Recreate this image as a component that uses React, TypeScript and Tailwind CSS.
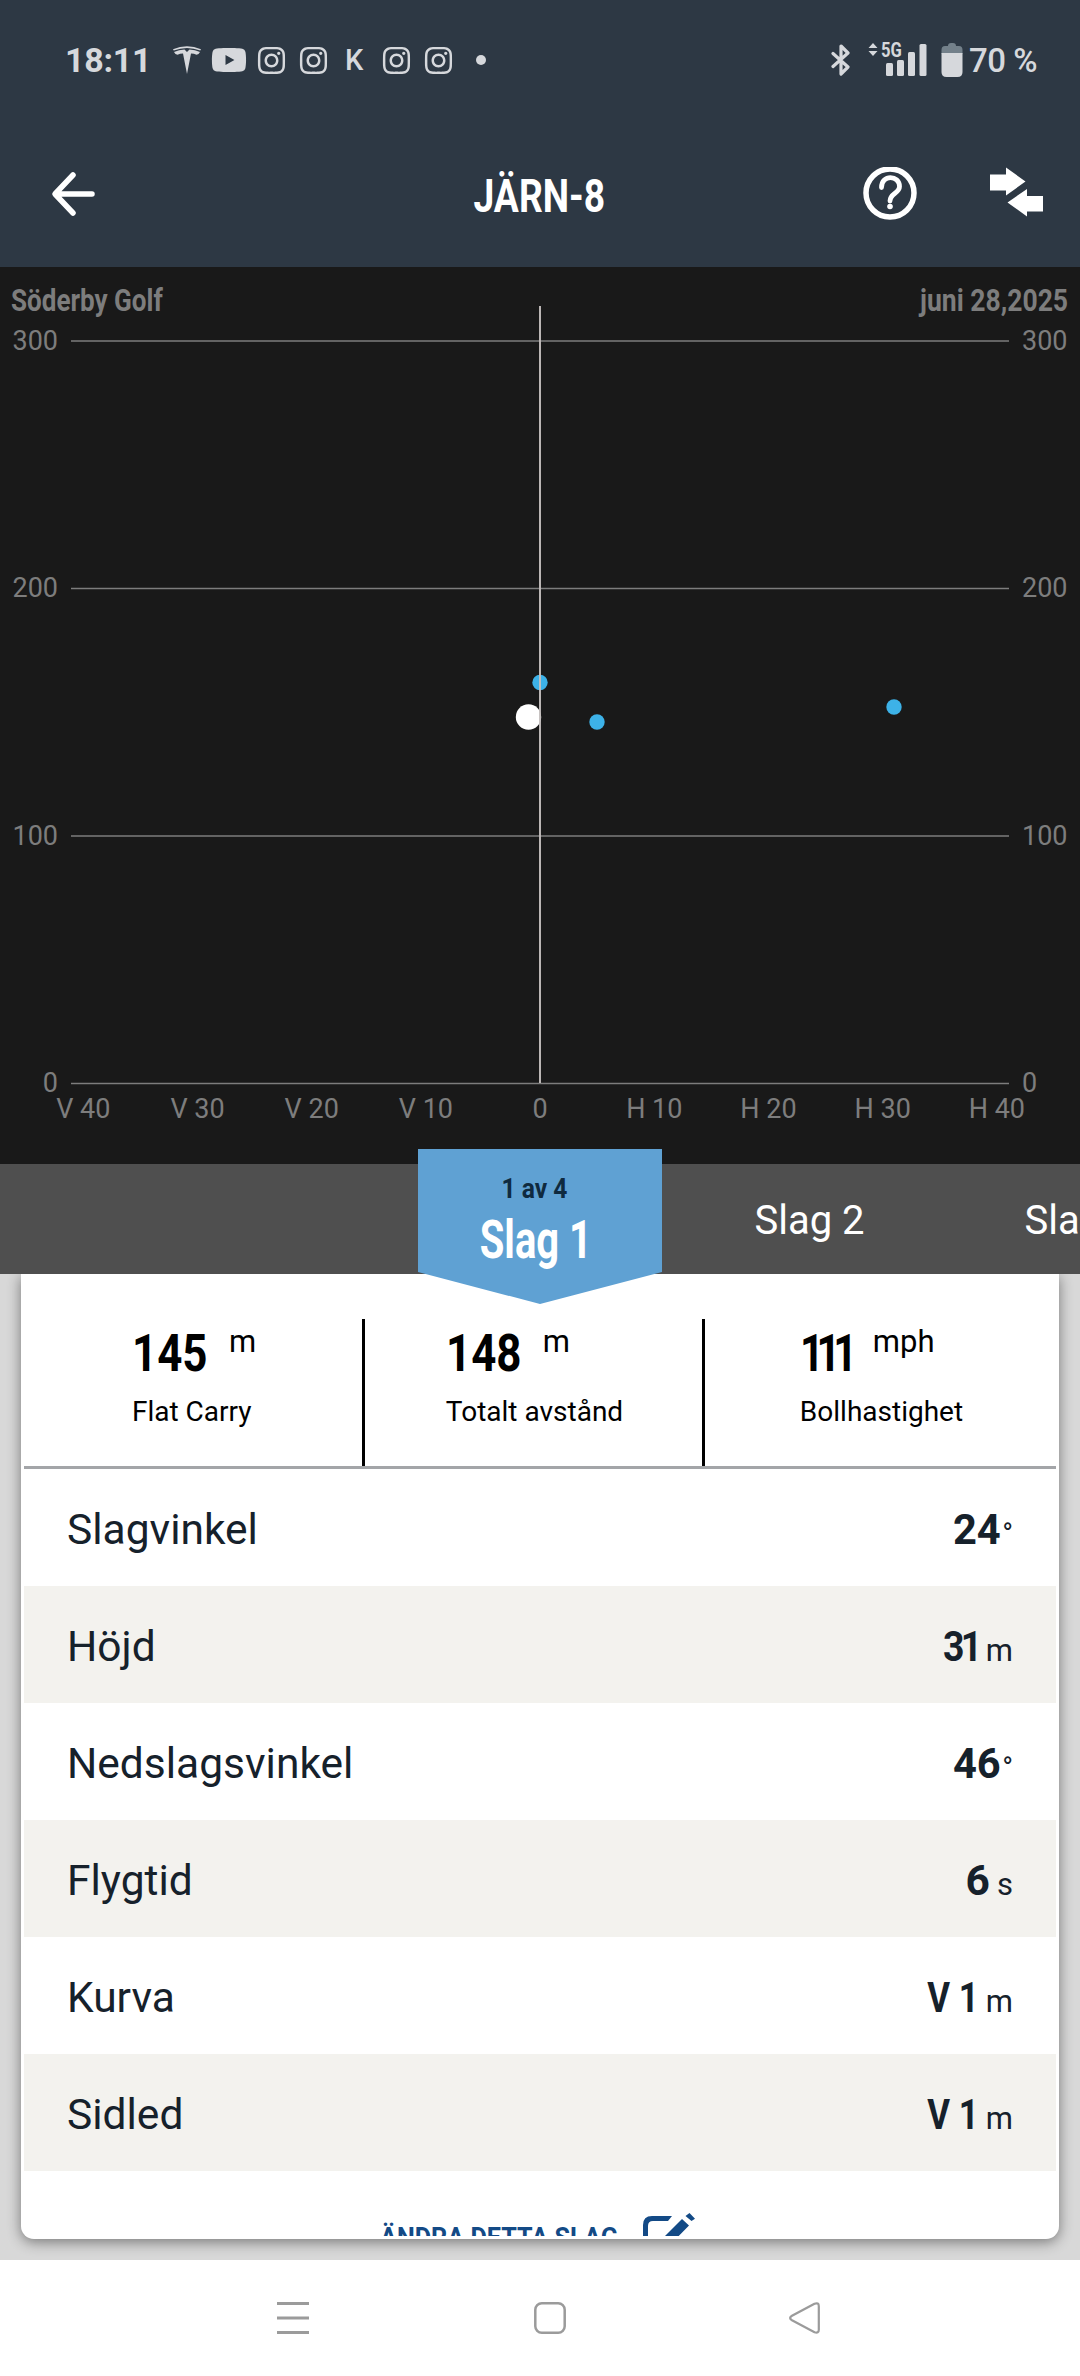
import { FaInstagram, FaYoutube } from 'react-icons/fa';

const stats = [
  { value: '145', unit: 'm', label: 'Flat Carry', width: 'w-[97px]', scale: 'scale-x-[0.86]' },
  { value: '148', unit: 'm', label: 'Totalt avstånd', width: 'w-[97px]', scale: 'scale-x-[0.86]' },
  { value: '111', unit: 'mph', label: 'Bollhastighet', width: 'w-[73px]', scale: 'scale-x-[0.82] tracking-[-9px]' },
];

const rows = [
  { label: 'Slagvinkel', value: '24', unit: '°', scale: 'scale-x-[0.98]' },
  { label: 'Höjd', value: '31', unit: 'm', scale: 'scale-x-[0.88] tracking-[-4px]' },
  { label: 'Nedslagsvinkel', value: '46', unit: '°', scale: 'scale-x-[0.98]' },
  { label: 'Flygtid', value: '6', unit: 's', scale: '' },
  { label: 'Kurva', value: 'V 1', unit: 'm', scale: 'scale-x-[0.82]' },
  { label: 'Sidled', value: 'V 1', unit: 'm', scale: 'scale-x-[0.82]' },
];

const yTicks = [
  { label: '300', y: 74 },
  { label: '200', y: 321.5 },
  { label: '100', y: 569 },
  { label: '0', y: 816.5 },
];

const xTicks = ['V 40', 'V 30', 'V 20', 'V 10', '0', 'H 10', 'H 20', 'H 30', 'H 40'];

const shots = [
  { x: 540, y: 415.5 },
  { x: 597, y: 455 },
  { x: 894, y: 440 },
];

function StatusBar() {
  return (
    <div className="flex h-[120px] items-center justify-between pr-[43px] pl-[65px] text-[#d6d8dc]">
      <div className="flex items-center">
        <span className="w-[108px] text-[34px] leading-none font-bold tracking-[-0.3px]">18:11</span>
        <svg className="h-[28px] w-[28px]" viewBox="0 0 28 28" fill="currentColor">
          <path d="M0 3.2Q14-2.6 28 3.2L27.3 4.6Q14-.6.7 4.6Z" />
          <path d="M1 6Q6 3.4 11.5 3.4L14 6l2.500-2.600Q22 3.400 27 6q-1.200 2.600-3.500 2.800Q21 7.400 18 7.400L14 28 10 7.400Q7 7.400 4.500 8.800 2.200 8.600 1 6Z" />
        </svg>
        <FaYoutube className="ml-[10px] h-[36px] w-[36px]" />
        <FaInstagram className="ml-[9px] h-[31px] w-[31px]" />
        <FaInstagram className="ml-[11px] h-[31px] w-[31px]" />
        <span className="ml-[16px] w-[20px] text-[29px] leading-none font-medium">K</span>
        <FaInstagram className="ml-[16px] h-[31px] w-[31px]" />
        <FaInstagram className="ml-[11px] h-[31px] w-[31px]" />
        <span className="ml-[22px] h-[10px] w-[10px] rounded-full bg-current" />
      </div>
      <div className="flex items-center">
        <svg className="h-[34px] w-[20px]" viewBox="0 0 20 34" fill="none" stroke="currentColor" strokeWidth="3.200">
          <path d="M2 10.500 17 24 10 31V3l7 7L2 23.500" strokeLinejoin="round" strokeLinecap="round" />
        </svg>
        <div className="relative ml-[17px] h-[34px] w-[60px]">
          <svg className="h-[34px] w-[60px]" viewBox="0 0 60 34" fill="currentColor">
            <path d="M5 0l4.500 5h-9ZM5 13L.5 8h9Z" />
            <rect x="18" y="20" width="7" height="13" rx="1.500" />
            <rect x="29" y="17" width="7" height="16" rx="1.500" />
            <rect x="40" y="9" width="7" height="24" rx="1.500" />
            <rect x="51.500" y="1" width="7" height="32" rx="1.500" />
          </svg>
          <span className="absolute -top-[4px] left-[13px] origin-left scale-x-[0.83] text-[20px] leading-[22px] font-bold">5G</span>
        </div>
        <svg className="ml-[13px] h-[36px] w-[22px]" viewBox="0 0 22 36">
          <path d="M4 4h3q0-3 3-3h2q3 0 3 3h3q3.500 0 3.500 4v4H.5V8Q.5 4 4 4Z" fill="#73808a" />
          <path d="M.5 11h21v19q0 5-5 5h-11q-5 0-5-5Z" fill="currentColor" />
        </svg>
        <span className="ml-[6px] text-[33px] leading-none font-medium tracking-[-0.5px]">70 %</span>
      </div>
    </div>
  );
}

function AppBar() {
  return (
    <div className="flex h-[147px] items-center justify-between pr-[37px] pl-[50px] text-white">
      <svg className="h-[48px] w-[166px]" viewBox="0 0 166 48" fill="none" stroke="currentColor" strokeWidth="5.500" strokeLinecap="round" strokeLinejoin="round">
        <path d="M42 24H6M23 5 5 24l18 19" />
      </svg>
      <h1 className="mt-[4px] scale-x-[0.81] text-[46px] leading-none font-bold">JÄRN-8</h1>
      <div className="flex items-center gap-[73px]">
        <svg className="h-[54px] w-[54px]" viewBox="0 0 54 54" fill="none" stroke="currentColor" strokeWidth="5.500" strokeLinecap="round">
          <circle cx="27" cy="26" r="24" />
          <path d="M18.500 20.500C18.500 7 36.500 8 36.500 19.500c0 7-9.500 6.500-9.500 14.500" strokeWidth="4.800" />
          <circle cx="27" cy="39.500" r="2.800" fill="currentColor" stroke="none" />
        </svg>
        <svg className="mb-[3px] h-[50px] w-[53px]" viewBox="0 0 53 50" fill="currentColor">
          <path d="M0 7.500h16V.5l19.500 14L16 28.500v-5H0Z" />
          <path d="M53 44.500H37v5L17.500 35.500 37 22v7h16Z" />
        </svg>
      </div>
    </div>
  );
}

function ShotChart() {
  return (
    <section className="relative">
      <div className="absolute inset-x-0 top-[17px] flex justify-between pr-[12px] pl-[11px] text-[31px] leading-[34px] font-bold text-[#7d7d7d]">
        <span className="origin-left scale-x-[0.84]">Söderby Golf</span>
        <span className="origin-right scale-x-[0.855]">juni 28,2025</span>
      </div>
      <svg className="block h-[897px] w-full bg-[#191919]" viewBox="0 0 1080 897" fontSize="27" fill="#7d7d7d">
        {yTicks.map((tick) => (
          <g key={tick.label}>
            <text x="58" y={tick.y + 8.5} textAnchor="end">{tick.label}</text>
            <line x1="71" x2="1009" y1={tick.y} y2={tick.y} stroke="#7d7d7d" strokeWidth="1.500" />
            <text x="1022" y={tick.y + 8.5}>{tick.label}</text>
          </g>
        ))}
        {xTicks.map((label, i) => (
          <text key={label} x={83.3 + i * 114.2} y="851" textAnchor="middle">{label}</text>
        ))}
        {shots.map((shot) => (
          <circle key={shot.x} cx={shot.x} cy={shot.y} r="7.700" fill="#3db2e8" />
        ))}
        <circle cx="528.500" cy="450" r="12.700" fill="#fff" />
        <rect x="539" y="39" width="2" height="777" fill="#c4bfbe" fillOpacity="0.950" />
      </svg>
    </section>
  );
}

function ShotTabs() {
  return (
    <div className="relative z-10 flex h-[110px] bg-[#4f4f4f] pl-[418px] text-[40px] text-white">
      <div className="-mt-[15px] flex h-[155px] w-[244px] shrink-0 flex-col items-center bg-[#5fa1d3] pt-[20px] [clip-path:polygon(0_0,100%_0,100%_123px,50%_100%,0_123px)]">
        <span className="mr-[11px] scale-x-[0.88] text-[28px] leading-[40px] font-bold text-[#0f2a3f]">1 av 4</span>
        <span className="mr-[8px] scale-x-[0.74] text-[54px] leading-[62px] font-bold">Slag 1</span>
      </div>
      <span className="w-[295px] shrink-0 text-center leading-[114px]">Slag 2</span>
      <span className="w-[245px] shrink-0 text-center leading-[114px]">Slag 3</span>
    </div>
  );
}

function ShotCard() {
  return (
    <div className="h-[986px] bg-[#d8d8d8] px-[21px]">
      <div className="h-[965px] rounded-b-[13px] bg-white px-[3px] pb-[3px] shadow-[0_3px_14px_rgba(0,0,0,0.45)]">
        <div className="h-full overflow-hidden">
          <div className="grid h-[195px] grid-cols-[338px_340px_354px] border-b-[3px] border-[#a3a5a8] pt-[45px] text-black">
            {stats.map((stat) => (
              <div key={stat.label} className="flex justify-center border-l-[3px] border-black pl-[2px] first:border-l-0">
                <div>
                  <div className="flex h-[68px]">
                    <span className={`${stat.width} ${stat.scale} origin-left text-[51px] leading-[70px] font-bold`}>{stat.value}</span>
                    <span className="text-[31px] leading-[45px]">{stat.unit}</span>
                  </div>
                  <p className="text-[28px] leading-[50px]">{stat.label}</p>
                </div>
              </div>
            ))}
          </div>
          {rows.map((row) => (
            <div key={row.label} className="flex h-[117px] justify-between pr-[43px] pl-[43px] text-[#16212b] odd:bg-[#f3f2ee]">
              {/* fixed box height cuts the descenders */}
              <span className="mt-[36px] h-[48px] overflow-hidden text-[42.500px] leading-[50px]">{row.label}</span>
              <span className="mt-[36px] flex items-baseline leading-[50px]">
                <b className={`${row.scale} origin-right text-[42.500px] font-bold`}>{row.value}</b>
                <span className={row.unit === '°' ? 'ml-[1px] text-[29px]' : 'ml-[7px] text-[31px]'}>{row.unit}</span>
              </span>
            </div>
          ))}
          <div className="flex h-[100px] text-[#134a86]">
            <span className="mt-[46px] ml-[356px] w-[263px] origin-left scale-x-[0.9] text-[28px] leading-[42px] font-bold whitespace-nowrap">ÄNDRA DETTA SLAG</span>
            <svg className="mt-[42px] h-[54px] w-[54px]" viewBox="0 0 54 54" fill="currentColor">
              <path d="M29 3H9Q0 3 0 12v31q0 9 9 9h28q9 0 9-9V26l-5 5v11q0 5-5 5H10q-5 0-5-5V13q0-5 5-5h15Z" />
              <path d="M42.500 3 46.500 0 52 5.700 48.500 8ZM39 6l7 6.500L24 35l-9 2 2-9Z" />
            </svg>
          </div>
        </div>
      </div>
    </div>
  );
}

function NavBar() {
  return (
    <div className="flex h-[116px] items-center bg-white pl-[277px] text-[#9b9b9b]">
      <svg className="h-[34px] w-[32px]" viewBox="0 0 32 34" stroke="currentColor" strokeWidth="2.800">
        <path d="M0 2.500h32M0 17h32M0 31.500h32" />
      </svg>
      <svg className="ml-[225px] h-[34px] w-[32px]" viewBox="0 0 32 34" fill="none" stroke="currentColor" strokeWidth="2.500">
        <rect x="1.300" y="2.300" width="29.400" height="29.400" rx="6.500" />
      </svg>
      <svg className="ml-[222px] h-[34px] w-[34px]" viewBox="0 0 34 34" fill="none" stroke="currentColor" strokeWidth="2.200">
        <path d="M26.500 2.700 4 14.800q-3.800 2.200 0 4.400l22.500 12q4.300 1.500 4.300-2.500V5.200q0-4-4.300-2.500Z" />
      </svg>
    </div>
  );
}

export default function App() {
  return (
    <main className="h-[2376px] w-[1080px] overflow-hidden bg-white font-['Roboto',sans-serif]">
      <header className="bg-[#2d3844]">
        <StatusBar />
        <AppBar />
      </header>
      <ShotChart />
      <ShotTabs />
      <ShotCard />
      <NavBar />
    </main>
  );
}
